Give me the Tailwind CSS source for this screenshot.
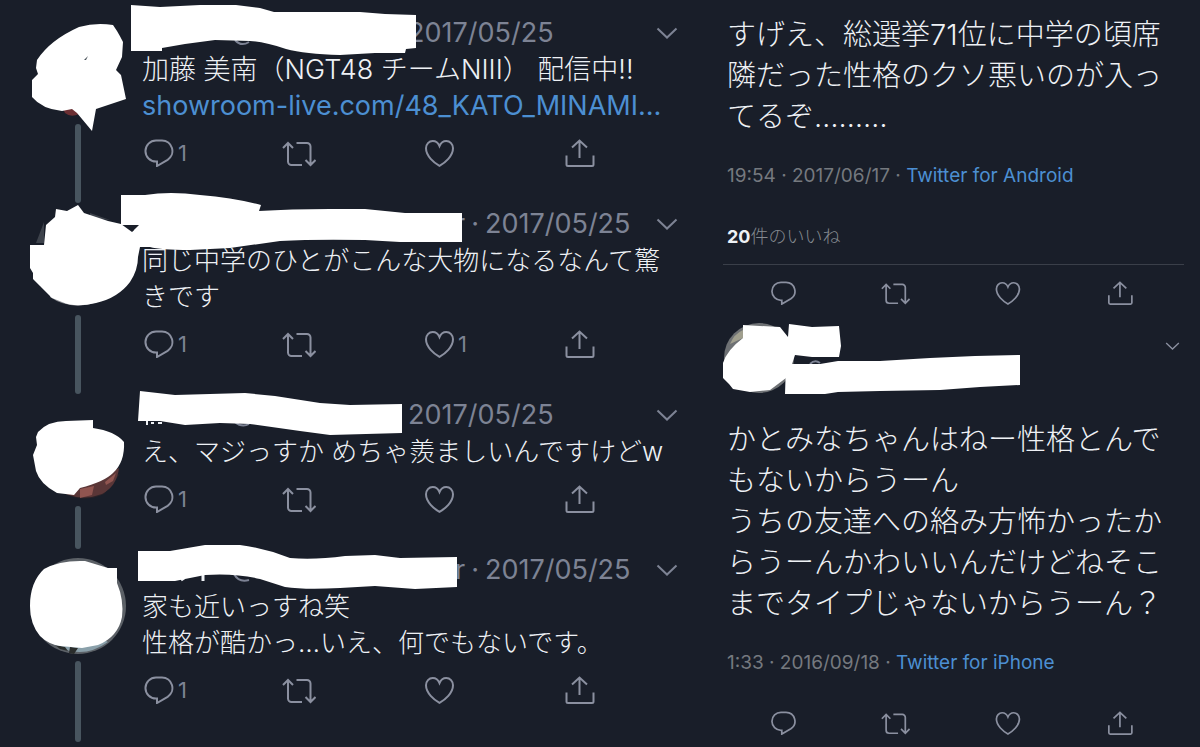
<!DOCTYPE html>
<html lang="ja">
<head>
  <meta charset="UTF-8">
  <meta name="viewport" content="width=device-width, initial-scale=1.0">
  <title>スレッド</title>
  <script src="https://cdn.jsdelivr.net/npm/@tailwindcss/browser@4"></script>
</head>
<body class="bg-[#191e29] text-[#eef1f5] font-[Inter,'Noto_Sans_CJK_JP',sans-serif] overflow-x-hidden">

  <!-- Icons -->
  <svg class="hidden">
    <symbol id="reply" viewBox="0 0 34 28"><path d="M14 1.5h6a10.5 10.5 0 0 1 5.6 19.3L15 27v-4.4h-1A10.55 10.55 0 0 1 14 1.5z"/></symbol>
    <symbol id="retweet" viewBox="0 0 34 28"><path d="M1 9l5-5 5 5M6 4v18.5A3.5 3.5 0 0 0 9.5 26H20M14.5 4H25a3.5 3.5 0 0 1 3.5 3.5V26M23.5 21l5 5 5-5"/></symbol>
    <symbol id="heart" viewBox="0 0 34 28"><path d="M17.5 26.8C12 23.8 4 17 4 9.3 4 5.2 7 2 10.7 2c3 0 5.5 1.8 6.8 5 1.3-3.2 3.8-5 6.8-5C28 2 31 5.2 31 9.3c0 7.7-8 14.5-13.5 17.5z"/></symbol>
    <symbol id="share" viewBox="0 0 34 28"><path d="M17.5 19V2M10 8.5L17.5 1.5 25 8.5M4.500 16.500v9a1.500 1.500 0 0 0 1.500 1.500h24a1.500 1.500 0 0 0 1.500-1.500v-9"/></symbol>
    <symbol id="chevron" viewBox="0 0 22 12"><path d="M1.500 1.500L11 10.500l9.500-9"/></symbol>
  </svg>

  <main class="grid grid-cols-[minmax(0,7fr)_minmax(0,5fr)]">

    <!-- Thread -->
    <section class="pt-[21px] pl-[30px] pr-[22px]">
      <article class="flex gap-4">
        <div class="flex flex-col items-center shrink-0">
          <svg class="size-24 overflow-visible" viewBox="30 21 96 96" aria-hidden="true">
            <path fill="#6b2f33" d="M63 109l14 0 2 5q-8 4-14-1z"/>
            <path fill="#fff" d="M37 60Q50 40 79 27Q96 22 113 25L117 31Q120 36 123 42L122 57L116 70L121 75L126 99L96 109L92 131L77 113L72 109L62 111Q42 109 32 97V80L38 74L36 68z"/>
            <path fill="#475058" d="M84 60l4-4-2 4z"/>
          </svg>
          <div class="w-1.5 grow mt-[7px] mb-[9px] rounded-full bg-[#48555f]"></div>
        </div>
        <div class="grow min-w-0">
          <header class="flex items-center h-6 text-[27px] text-[#7d8394]">
            <svg class="relative z-10 shrink-0 w-[266px] h-6 overflow-visible" viewBox="142 21 266 24" aria-hidden="true">
              <path fill="none" stroke="#7d8394" stroke-width="2" d="M235 40q6 7 14 2"/>
              <path fill="#fff" d="M131 5L160 7L200 5H236L260 8L274 12L360 12L385 14L416 15V48L406 49L405 53L375 53L340 55Q305 54 286 49Q265 42 250 41L215 40L185 44L162 48V51H131z"/>
            </svg>
            <time>2017/05/25</time>
            <button class="ml-auto" aria-label="メニュー"><svg class="w-[22px] h-3 fill-none stroke-[#7d8394] stroke-2"><use href="#chevron"/></svg></button>
          </header>
          <p class="mt-[7px] text-[27px] leading-9 font-light">加藤 美南（NGT48 チームNIII） 配信中!!<br><a href="#" class="text-[#4c8fd2] font-normal">showroom-live.com/48_KATO_MINAMI…</a></p>
          <div class="grid grid-cols-[repeat(3,140px)_34px] pt-[15px] pb-[45px] text-[22px] leading-7 text-[#7d8394]">
            <button class="flex gap-0.5" aria-label="返信"><svg class="w-[34px] h-7 fill-none stroke-[#8b90a0] stroke-2"><use href="#reply"/></svg>1</button>
            <button class="flex" aria-label="リツイート"><svg class="w-[34px] h-7 fill-none stroke-[#8b90a0] stroke-2"><use href="#retweet"/></svg></button>
            <button class="flex" aria-label="いいね"><svg class="w-[34px] h-7 fill-none stroke-[#8b90a0] stroke-2"><use href="#heart"/></svg></button>
            <button class="flex" aria-label="共有"><svg class="w-[34px] h-7 fill-none stroke-[#8b90a0] stroke-2"><use href="#share"/></svg></button>
          </div>
        </div>
      </article>

      <article class="flex gap-4">
        <div class="flex flex-col items-center shrink-0">
          <svg class="relative size-24 overflow-visible" viewBox="30 212 96 96" aria-hidden="true">
            <path fill="#3d424b" d="M44 222L36 243H44zM90 213l20 7-20-2z"/>
            <path fill="#8a8c92" d="M50 297q22 15 50 4l8-7-58-1z"/>
            <path fill="#fff" d="M56 209L67 211L78 205L84 213L108 221L121 224L132 232L140 225V247L138 257Q138 270 130 282Q118 298 96 303Q75 308 62 302L52 298L40 286L33 279V273L30 268V245H44L46 225L55 217z"/>
          </svg>
          <div class="w-1.5 grow mt-[7px] mb-[9px] rounded-full bg-[#48555f]"></div>
        </div>
        <div class="grow min-w-0">
          <header class="flex items-center h-6 text-[27px] text-[#7d8394]">
            <svg class="relative z-10 shrink-0 w-[313px] h-6 overflow-visible" viewBox="142 212 313 24" aria-hidden="true">
              <path fill="#fff" d="M121 195H145Q170 191 200 195Q235 198 261 205L259 211Q290 209 330 209H365L405 213H462V242H400L365 240Q315 239 280 241L230 248L190 250Q160 250 150 247H134V230L139 225H121z"/>
            </svg>
            <span class="flex gap-1.5"><span>r</span><span>·</span><time>2017/05/25</time></span>
            <button class="ml-auto" aria-label="メニュー"><svg class="w-[22px] h-3 fill-none stroke-[#7d8394] stroke-2"><use href="#chevron"/></svg></button>
          </header>
          <p class="mt-[7px] text-[26px] leading-9 font-light">同じ中学のひとがこんな大物になるなんて驚きです</p>
          <div class="grid grid-cols-[repeat(3,140px)_34px] pt-[15px] pb-[45px] text-[22px] leading-7 text-[#7d8394]">
            <button class="flex gap-0.5" aria-label="返信"><svg class="w-[34px] h-7 fill-none stroke-[#8b90a0] stroke-2"><use href="#reply"/></svg>1</button>
            <button class="flex" aria-label="リツイート"><svg class="w-[34px] h-7 fill-none stroke-[#8b90a0] stroke-2"><use href="#retweet"/></svg></button>
            <button class="flex gap-0.5" aria-label="いいね"><svg class="w-[34px] h-7 fill-none stroke-[#8b90a0] stroke-2"><use href="#heart"/></svg>1</button>
            <button class="flex" aria-label="共有"><svg class="w-[34px] h-7 fill-none stroke-[#8b90a0] stroke-2"><use href="#share"/></svg></button>
          </div>
        </div>
      </article>

      <article class="flex gap-4">
        <div class="flex flex-col items-center shrink-0">
          <svg class="size-24 overflow-visible" viewBox="30 403 96 96" aria-hidden="true">
            <path fill="#2b2328" d="M62 492q20 12 42 2l16-20z"/>
            <path fill="#5a3637" d="M66 494L119 468Q117 486 102 494Q84 501 66 494z"/>
            <path fill="#905550" d="M80 489l14-3-2 9-12 3zM105 482l11-9-3 8-7 4z"/>
            <path fill="#fff" d="M38 432Q48 421 66 421L93 420V428Q115 431 124 442Q125 462 113 473Q104 482 80 488L74 495L57 493Q40 484 36 471L33 455L37 445L36 437z"/>
          </svg>
          <div class="w-1.5 grow mt-[7px] mb-[9px] rounded-full bg-[#48555f]"></div>
        </div>
        <div class="grow min-w-0">
          <header class="flex items-center h-6 text-[27px] text-[#7d8394]">
            <svg class="relative z-10 shrink-0 w-[266px] h-6 overflow-visible" viewBox="142 403 266 24" aria-hidden="true">
              <path fill="none" stroke="#eef1f5" stroke-width="2" d="M147 420v5M151 423h3M158 423h4"/>
              <path fill="none" stroke="#7d8394" stroke-width="2" d="M235 422q7 6 14 2"/>
              <path fill="#fff" d="M140 391L175 395L245 393L275 396L320 403L350 405L402 404V433L330 435L300 431L250 424L220 423L185 425L160 421H138z"/>
            </svg>
            <time>2017/05/25</time>
            <button class="ml-auto" aria-label="メニュー"><svg class="w-[22px] h-3 fill-none stroke-[#7d8394] stroke-2"><use href="#chevron"/></svg></button>
          </header>
          <p class="mt-[7px] text-[26px] leading-9 font-light">え、マジっすか めちゃ羨ましいんですけどw</p>
          <div class="grid grid-cols-[repeat(3,140px)_34px] pt-[15px] pb-[45px] text-[22px] leading-7 text-[#7d8394]">
            <button class="flex gap-0.5" aria-label="返信"><svg class="w-[34px] h-7 fill-none stroke-[#8b90a0] stroke-2"><use href="#reply"/></svg>1</button>
            <button class="flex" aria-label="リツイート"><svg class="w-[34px] h-7 fill-none stroke-[#8b90a0] stroke-2"><use href="#retweet"/></svg></button>
            <button class="flex" aria-label="いいね"><svg class="w-[34px] h-7 fill-none stroke-[#8b90a0] stroke-2"><use href="#heart"/></svg></button>
            <button class="flex" aria-label="共有"><svg class="w-[34px] h-7 fill-none stroke-[#8b90a0] stroke-2"><use href="#share"/></svg></button>
          </div>
        </div>
      </article>

      <article class="flex gap-4">
        <div class="flex flex-col items-center shrink-0">
          <svg class="size-24 overflow-visible" viewBox="30 558 96 96" aria-hidden="true">
            <circle cx="78" cy="606" r="48" fill="#5c6167"/>
            <path fill="#8aa0aa" d="M50 642q30 20 58 0l-8-4H56z"/>
            <path fill="#2a2d2c" d="M55 645l10 2 3 4-8-2zM70 647l8 1-4 6-5-1z"/>
            <path fill="#fff" d="M44 569Q60 560 85 561L108 568H117V583Q124 600 122 617Q118 637 98 645L82 648L60 646Q48 644 40 636Q30 624 30 606Q30 582 44 569z"/>
          </svg>
          <div class="w-1.5 grow mt-[7px] mb-[5px] rounded-full bg-[#48555f]"></div>
        </div>
        <div class="grow min-w-0">
          <header class="flex items-center h-6 text-[27px] text-[#7d8394]">
            <svg class="relative z-10 shrink-0 w-[313px] h-6 overflow-visible" viewBox="142 558 313 24" aria-hidden="true">
              <path fill="none" stroke="#eef1f5" stroke-width="3" d="M203 574v7M181 580l3-2"/>
              <path fill="none" stroke="#7d8394" stroke-width="2" d="M234 574q5 9 15 6"/>
              <path fill="#fff" d="M138 551H170L205 545H240Q265 548 290 558Q315 560 345 556L375 555L400 558L457 557V587L415 589L375 586L340 588Q305 590 285 587L260 579Q235 573 205 575L175 581H138z"/>
            </svg>
            <span class="flex gap-1.5"><span>r</span><span>·</span><time>2017/05/25</time></span>
            <button class="ml-auto" aria-label="メニュー"><svg class="w-[22px] h-3 fill-none stroke-[#7d8394] stroke-2"><use href="#chevron"/></svg></button>
          </header>
          <p class="mt-[7px] text-[26px] leading-9 font-light">家も近いっすね笑<br>性格が酷かっ…いえ、何でもないです。</p>
          <div class="grid grid-cols-[repeat(3,140px)_34px] pt-[15px] pb-[43px] text-[22px] leading-7 text-[#7d8394]">
            <button class="flex gap-0.5" aria-label="返信"><svg class="w-[34px] h-7 fill-none stroke-[#8b90a0] stroke-2"><use href="#reply"/></svg>1</button>
            <button class="flex" aria-label="リツイート"><svg class="w-[34px] h-7 fill-none stroke-[#8b90a0] stroke-2"><use href="#retweet"/></svg></button>
            <button class="flex" aria-label="いいね"><svg class="w-[34px] h-7 fill-none stroke-[#8b90a0] stroke-2"><use href="#heart"/></svg></button>
            <button class="flex" aria-label="共有"><svg class="w-[34px] h-7 fill-none stroke-[#8b90a0] stroke-2"><use href="#share"/></svg></button>
          </div>
        </div>
      </article>
    </section>

    <!-- Single tweets -->
    <section class="pt-3.5 pl-[23px] pr-4">
      <article>
        <p class="pl-1 text-[29px] leading-[41px] font-light">すげえ、総選挙71位に中学の頃席隣だった性格のクソ悪いのが入ってるぞ………</p>
        <p class="mt-[27px] pl-1 text-[19px] leading-6 text-[#75797f]"><time>19:54 · 2017/06/17</time> · <a href="#" class="text-[#4c8fd2]">Twitter for Android</a></p>
        <p class="mt-[37px] pl-1 pb-[15px] text-[18px] leading-6 font-light text-[#858a90] border-b border-[#3a3f49]"><b class="font-bold text-[#eef1f5]">20</b>件のいいね</p>
        <div class="grid grid-cols-4 w-[448px] pt-4 ml-1 justify-items-center">
          <button aria-label="返信"><svg class="w-[29px] h-6 fill-none stroke-[#8b90a0] stroke-2"><use href="#reply"/></svg></button>
          <button aria-label="リツイート"><svg class="w-[29px] h-6 fill-none stroke-[#8b90a0] stroke-2"><use href="#retweet"/></svg></button>
          <button aria-label="いいね"><svg class="w-[29px] h-6 fill-none stroke-[#8b90a0] stroke-2"><use href="#heart"/></svg></button>
          <button aria-label="共有"><svg class="w-[29px] h-6 fill-none stroke-[#8b90a0] stroke-2"><use href="#share"/></svg></button>
        </div>
      </article>

      <article class="pt-[18px]">
        <header class="flex justify-between items-start">
          <svg class="w-[297px] h-[70px] overflow-visible" viewBox="723 323 297 70" aria-hidden="true">
            <circle cx="759" cy="358" r="35" fill="#6e7174"/>
            <path fill="#a09f8e" d="M730 344q4-10 13-14v8z"/>
            <path fill="none" stroke="#7d8394" stroke-width="2" d="M810 364q5-5 10-1"/>
            <path fill="#fff" d="M743 325L780 327L788 337L789 324L812 327L839 326L841 346L839 357H812L795 355L792 364L786 378L770 390L750 392L733 389L729 384L723 378V363Q727 350 743 338z"/>
            <path fill="#fff" d="M786 364L820 364L838 361L880 361L930 358L975 356L1020 355V385L980 387L940 390L880 391L838 392L825 394H785z"/>
          </svg>
          <button class="mt-[19px] mr-1" aria-label="メニュー"><svg class="w-[15px] h-2 fill-none stroke-[#8b90a0] stroke-2"><use href="#chevron"/></svg></button>
        </header>
        <p class="mt-[26px] pl-1 text-[29px] leading-[41px] font-light">かとみなちゃんはねー性格とんでもないからうーん<br>うちの友達への絡み方怖かったからうーんかわいいんだけどねそこまでタイプじゃないからうーん？</p>
        <p class="mt-[27px] pl-1 text-[19px] leading-6 text-[#75797f]"><time>1:33 · 2016/09/18</time> · <a href="#" class="text-[#4c8fd2]">Twitter for iPhone</a></p>
        <div class="grid grid-cols-4 w-[448px] pt-9 ml-1 justify-items-center">
          <button aria-label="返信"><svg class="w-[29px] h-6 fill-none stroke-[#8b90a0] stroke-2"><use href="#reply"/></svg></button>
          <button aria-label="リツイート"><svg class="w-[29px] h-6 fill-none stroke-[#8b90a0] stroke-2"><use href="#retweet"/></svg></button>
          <button aria-label="いいね"><svg class="w-[29px] h-6 fill-none stroke-[#8b90a0] stroke-2"><use href="#heart"/></svg></button>
          <button aria-label="共有"><svg class="w-[29px] h-6 fill-none stroke-[#8b90a0] stroke-2"><use href="#share"/></svg></button>
        </div>
      </article>
    </section>
  </main>
</body>
</html>
